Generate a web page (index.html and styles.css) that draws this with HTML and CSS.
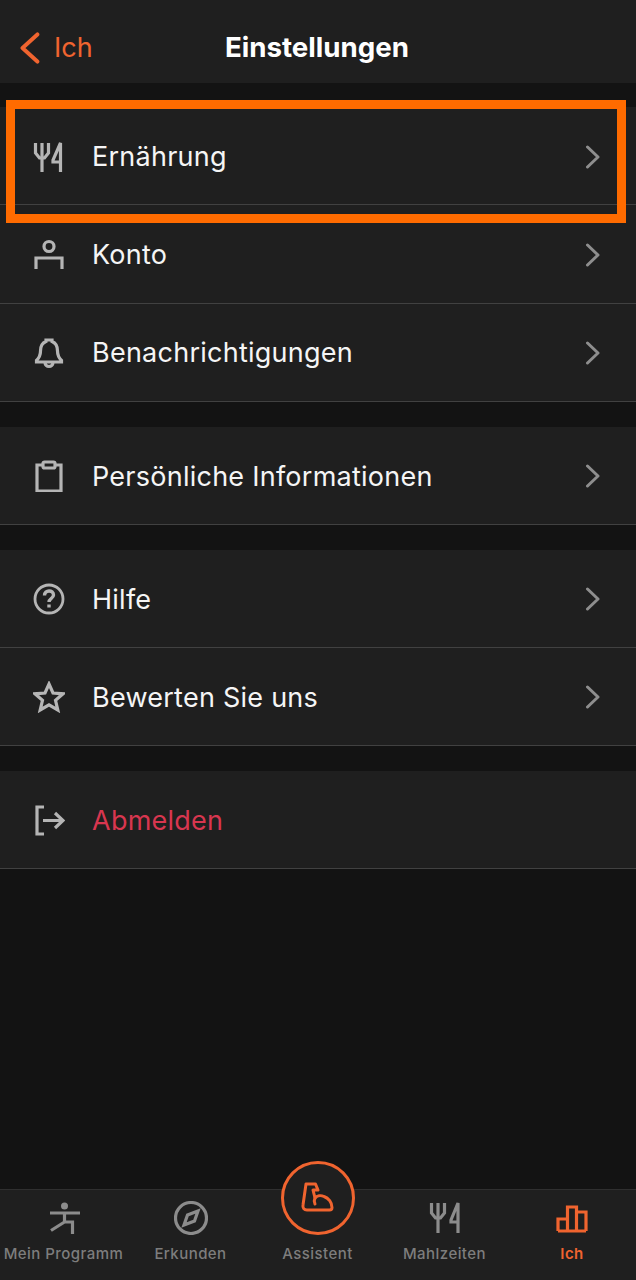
FILE: index.html
```html
<!DOCTYPE html>
<html lang="de">
<head>
    <meta charset="UTF-8">
    <meta name="viewport" content="width=device-width, initial-scale=1.0">
    <title>Einstellungen</title>
    <link rel="stylesheet" href="styles.css">
</head>
<body>
    <div class="screen">
        <header class="nav">
            <div class="nav-back">
                <svg class="back-icon" viewBox="0 0 24 36"><path d="M21 2.500 L4 18 L21 33.500"/></svg>
                <span>Ich</span>
            </div>
            <h1 class="nav-title">Einstellungen</h1>
        </header>

        <main class="content">
            <div class="group">
                <div class="row">
                    <svg class="row-icon row-icon-bold" viewBox="0 0 32 32"><path d="M2.500 2v10l4 5h5l4-5V2M9 2v29M27.500 31V2L20 19v2h7.500"/></svg>
                    <span class="row-label">Ernährung</span>
                    <svg class="chevron" viewBox="0 0 16 24"><path d="M2.500 2 L13 12 L2.500 22"/></svg>
                </div>
                <div class="row">
                    <svg class="row-icon row-icon-bold" viewBox="0 0 32 32"><circle cx="16" cy="7.500" r="5"/><path d="M3 30V19h26v11"/></svg>
                    <span class="row-label">Konto</span>
                    <svg class="chevron" viewBox="0 0 16 24"><path d="M2.500 2 L13 12 L2.500 22"/></svg>
                </div>
                <div class="row">
                    <svg class="row-icon row-icon-bold" viewBox="0 0 32 32"><path d="M13 4.500V3h6v1.500C23 6 24.500 9.500 24.500 14c0 5 1.500 7 4 9.500v1.500h-25v-1.500c2.500-2.500 4-4.500 4-9.500 0-4.500 1.500-8 5.500-9.500z"/><path d="M12 25.500a4 4 0 0 0 8 0"/></svg>
                    <span class="row-label">Benachrichtigungen</span>
                    <svg class="chevron" viewBox="0 0 16 24"><path d="M2.500 2 L13 12 L2.500 22"/></svg>
                </div>
            </div>

            <div class="group">
                <div class="row">
                    <svg class="row-icon row-icon-bold" viewBox="0 0 32 32"><path d="M10 5H4v26h24V5h-6"/><rect x="10" y="2" width="12" height="6" rx="1.500"/></svg>
                    <span class="row-label">Persönliche Informationen</span>
                    <svg class="chevron" viewBox="0 0 16 24"><path d="M2.500 2 L13 12 L2.500 22"/></svg>
                </div>
            </div>

            <div class="group">
                <div class="row">
                    <svg class="row-icon" viewBox="0 0 32 32"><circle cx="16" cy="16" r="14"/><path d="M11.500 12.500c0-6 9-6 9-.5 0 3.500-4.500 3.500-4.500 7" class="thick"/><path d="M16 21.500v3" class="thick"/></svg>
                    <span class="row-label">Hilfe</span>
                    <svg class="chevron" viewBox="0 0 16 24"><path d="M2.500 2 L13 12 L2.500 22"/></svg>
                </div>
                <div class="row">
                    <svg class="row-icon row-icon-bold" viewBox="0 0 32 32"><path d="M16 3l4 9 10 .8-7.500 6.500 2.300 9.700-8.800-5.200-8.800 5.200 2.300-9.700L2 12.800 12 12z"/></svg>
                    <span class="row-label">Bewerten Sie uns</span>
                    <svg class="chevron" viewBox="0 0 16 24"><path d="M2.500 2 L13 12 L2.500 22"/></svg>
                </div>
            </div>

            <div class="group">
                <div class="row">
                    <svg class="row-icon row-icon-bold" viewBox="0 0 32 32"><path d="M11 3H4v27h7M10 16.500h20M22 9l8 7.500-8 7.500"/></svg>
                    <span class="row-label row-label-danger">Abmelden</span>
                </div>
            </div>
        </main>

        <nav class="tabbar">
            <div class="tab">
                <svg class="tab-icon" viewBox="0 0 34 34"><circle cx="17.500" cy="5" r="3.500" class="fill"/><path d="M3 12h30M17.500 12v9M17.500 21L4 29.500M17.500 21h8v12"/></svg>
                <span>Mein Programm</span>
            </div>
            <div class="tab">
                <svg class="tab-icon" viewBox="0 0 34 34"><circle cx="17" cy="17" r="15.500"/><path d="M24 10l-3.500 10L10 24l3.500-10z"/></svg>
                <span>Erkunden</span>
            </div>
            <div class="tab tab-assistant">
                <div class="assistant-ring">
                    <svg viewBox="0 0 34 34"><path d="M5 3h9.500L17 9h-5l2 8c2-2.500 6-3 9-1.500 4.500 1.500 8 6 8 11 0 1.500-1 2.500-2.500 2.500H6c-3 0-4.500-2-4-5z"/><path d="M14 17c-1 2-1 4 0 6"/></svg>
                </div>
                <span>Assistent</span>
            </div>
            <div class="tab">
                <svg class="tab-icon" viewBox="0 0 34 34"><path d="M3.500 2v10l4 5h5l4-5V2M10 2v30M30 32V2L23 19v2h7"/></svg>
                <span>Mahlzeiten</span>
            </div>
            <div class="tab tab-active">
                <svg class="tab-icon" viewBox="0 0 34 34"><path d="M3 30V18h9.500v12M12.500 30V6h9v24M21.500 30V11H31v19M3 30h28"/></svg>
                <span>Ich</span>
            </div>
        </nav>

        <div class="highlight"></div>
    </div>
</body>
</html>
```

FILE: styles.css
```css
* {
    box-sizing: border-box;
}
html, body {
    margin: 0;
    padding: 0;
}
body {
    background: #131313;
    font-family: Inter, "Noto Sans", sans-serif;
}
.screen {
    position: relative;
    width: 636px;
    height: 1280px;
    display: flex;
    flex-direction: column;
    overflow: hidden;
}

/* top bar */
.nav {
    position: relative;
    height: 83px;
    flex-shrink: 0;
    background: #1f1f1f;
    display: flex;
    align-items: center;
    justify-content: center;
}
.nav-back {
    position: absolute;
    left: 19px;
    top: 30px;
    display: flex;
    align-items: center;
    gap: 14px;
    color: #f0642f;
    font-size: 27px;
    line-height: 36px;
}
.back-icon {
    width: 21px;
    height: 34px;
    fill: none;
    stroke: #f0642f;
    stroke-width: 4.500;
    stroke-linecap: round;
    stroke-linejoin: round;
}
.nav-title {
    margin: 0 2px 0 0;
    color: #fff;
    font-size: 27.700px;
    font-weight: 700;
    line-height: 36px;
    position: relative;
    top: 5px;
}

/* settings rows */
.content {
    flex: 1;
    padding-top: 24px;
}
.group {
    background: #1f1f1f;
    margin-bottom: 24.750px;
}
.row {
    height: 98.250px;
    display: flex;
    align-items: center;
    padding: 2px 35px 0 33px;
    border-bottom: 1.500px solid #414141;
}
.row-icon {
    width: 32px;
    height: 32px;
    flex-shrink: 0;
    fill: none;
    stroke: #b5b5b5;
    stroke-width: 2.800;
}
.row-icon-bold {
    stroke-width: 3.200;
}
.row-icon .thick {
    stroke-width: 3.400;
}
.row-label {
    flex: 1;
    margin-left: 27px;
    color: #f5f5f5;
    font-size: 27px;
    letter-spacing: 0.250px;
    line-height: 36px;
}
.group + .group .row-label {
    padding-top: 2px;
}
.row-label-danger {
    color: #d8364f;
}
.chevron {
    width: 16px;
    height: 24px;
    fill: none;
    stroke: #8e8e8e;
    stroke-width: 3;
    stroke-linecap: round;
    stroke-linejoin: round;
}

/* bottom tabs */
.tabbar {
    height: 91px;
    flex-shrink: 0;
    background: #1f1f1f;
    border-top: 1.500px solid #2f2f2f;
    display: grid;
    grid-template-columns: 127px 127px 127px 127px 128px;
}
.tab {
    position: relative;
    display: flex;
    flex-direction: column;
    align-items: center;
    padding-top: 11px;
    color: #7d7d7d;
    font-size: 15px;
    font-weight: 500;
    letter-spacing: 0.450px;
    line-height: 20px;
    white-space: nowrap;
}
.tab span {
    position: absolute;
    top: 54px;
}
.tab-icon {
    width: 34px;
    height: 34px;
    fill: none;
    stroke: #8c8c8c;
    stroke-width: 3.200;
}
.tab-icon .fill {
    fill: #8c8c8c;
    stroke: none;
}
.tab-active {
    color: #f0642f;
    font-weight: 600;
}
.tab-active .tab-icon {
    stroke: #f0642f;
}
.assistant-ring {
    position: absolute;
    top: -29px;
    left: 27px;
    width: 74px;
    height: 74px;
    border: 3.500px solid #f0642f;
    border-radius: 50%;
    background: #1f1f1f;
    display: flex;
    align-items: center;
    justify-content: center;
}
.assistant-ring svg {
    width: 34px;
    height: 34px;
    fill: none;
    stroke: #f0642f;
    stroke-width: 3;
    stroke-linejoin: round;
    stroke-linecap: round;
}

/* annotation box drawn over the first row */
.highlight {
    position: absolute;
    left: 6px;
    top: 100px;
    width: 620px;
    height: 123px;
    border: 9.500px solid #ff6b00;
}
```
